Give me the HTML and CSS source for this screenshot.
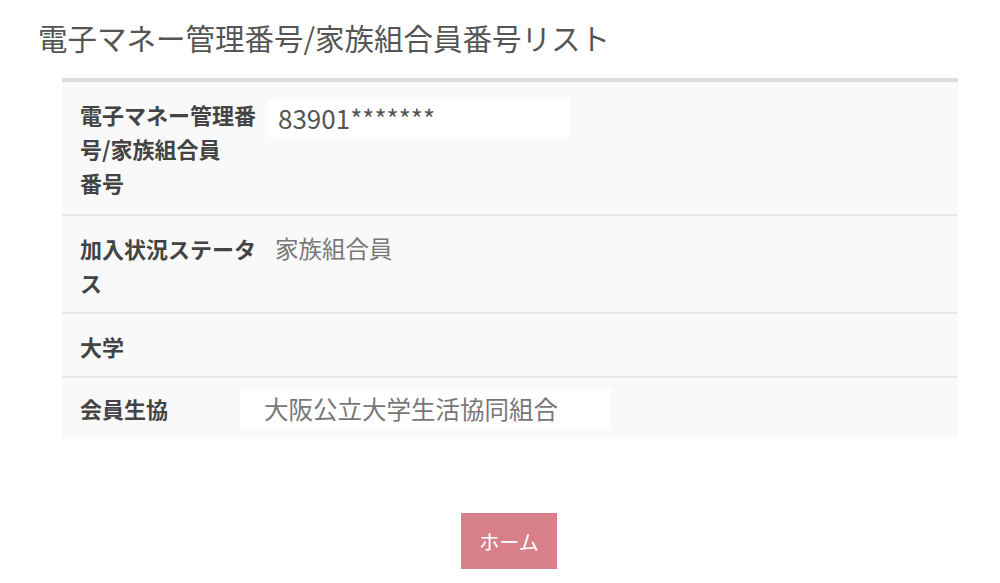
FILE: index.html
```html
<!DOCTYPE html>
<html lang="ja">
<head>
  <meta charset="UTF-8">
  <meta name="viewport" content="width=device-width, initial-scale=1.0">
  <title>電子マネー管理番号/家族組合員番号リスト</title>
  <link rel="stylesheet" href="styles.css">
</head>
<body>

  <h1 class="titulo">電子マネー管理番号/家族組合員番号リスト</h1>

  <!-- Tabela com os dados do cartão -->
  <div class="tabela">
    <div class="linha">
      <div class="rotulo">電子マネー管理番<br>号/家族組合員<br>番号</div>
      <div class="valor"><span class="caixa caixa-numero">83901*******</span></div>
    </div>
    <div class="linha">
      <div class="rotulo">加入状況ステータ<br>ス</div>
      <div class="valor">家族組合員</div>
    </div>
    <div class="linha">
      <div class="rotulo">大学</div>
      <div class="valor"></div>
    </div>
    <div class="linha">
      <div class="rotulo">会員生協</div>
      <div class="valor"><span class="caixa caixa-coop">大阪公立大学生活協同組合</span></div>
    </div>
  </div>

  <div class="acoes">
    <button class="botao-home">ホーム</button>
  </div>

</body>
</html>
```

FILE: styles.css
```css
body {
  font-family: "Noto Sans CJK JP", "Noto Sans", sans-serif;
  margin: 0;
  background-color: #fff;
  color: #444;
}
.titulo {
  margin: 0;
  padding: 17px 0 0 38px;
  height: 58px;
  box-sizing: border-box;
  font-size: 29.5px;
  font-weight: normal;
  line-height: 40px;
  color: #555;
}
.tabela {
  margin: 20px 42px 0 62px;
  border-top: 4px solid #dcdcdc;
  background-color: #f9f9f9;
}
.linha {
  display: flex;
  padding: 15px 0 13px 18px;
  border-bottom: 2px solid #e6e6e6;
  font-size: 22px;
  line-height: 34px;
}
.linha:first-child {
  padding-bottom: 15px;
}
.linha:last-child {
  border-bottom: none;
  padding-top: 13px;
  padding-bottom: 12px;
}
.rotulo {
  width: 176px;
  flex-shrink: 0;
  white-space: nowrap;
  font-weight: bold;
  color: #444;
}
.valor {
  margin-left: 19px;
  font-size: 23.5px;
  color: #777;
}
.caixa {
  display: block;
  background-color: #fff;
  box-sizing: border-box;
}
.caixa-numero {
  margin: 2px 0 0 -7px;
  width: 302px;
  height: 38px;
  padding: 0 10px;
  font-size: 26px;
  line-height: 38px;
  color: #555;
}
.caixa-coop {
  margin: -2px 0 -6px -35px;
  width: 371px;
  height: 42px;
  padding-left: 24px;
  font-size: 24.5px;
  line-height: 40px;
  color: #777;
}
.acoes {
  display: flex;
  justify-content: center;
  margin-top: 76px;
}
.botao-home {
  width: 96px;
  height: 56px;
  margin-left: 18px;
  border: none;
  background-color: #d7808a;
  color: #fff;
  font-family: inherit;
  font-size: 20px;
  cursor: pointer;
}
.botao-home:hover {
  background-color: #cc6f7a;
}
```
